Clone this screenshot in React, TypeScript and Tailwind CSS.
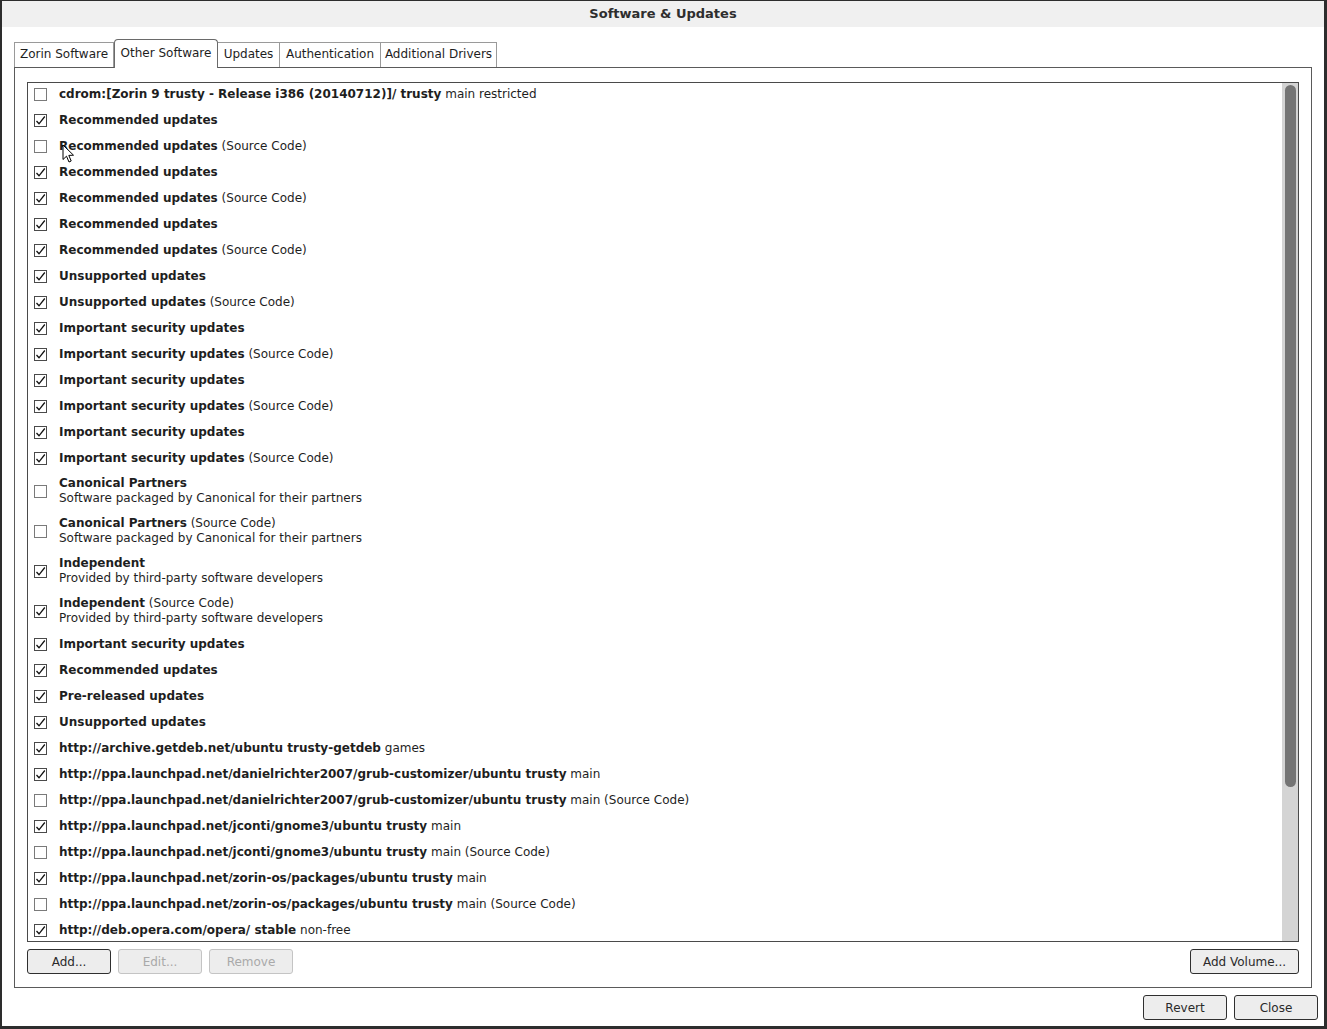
import { ReactNode } from 'react'

type Row = {
  checked: boolean
  title: string
  extra?: string
  sub?: string
}

const SRC = '(Source Code)'

const rows: Row[] = [
  { checked: false, title: 'cdrom:[Zorin 9 trusty - Release i386 (20140712)]/ trusty', extra: 'main restricted' },
  { checked: true, title: 'Recommended updates' },
  { checked: false, title: 'Recommended updates', extra: SRC },
  { checked: true, title: 'Recommended updates' },
  { checked: true, title: 'Recommended updates', extra: SRC },
  { checked: true, title: 'Recommended updates' },
  { checked: true, title: 'Recommended updates', extra: SRC },
  { checked: true, title: 'Unsupported updates' },
  { checked: true, title: 'Unsupported updates', extra: SRC },
  { checked: true, title: 'Important security updates' },
  { checked: true, title: 'Important security updates', extra: SRC },
  { checked: true, title: 'Important security updates' },
  { checked: true, title: 'Important security updates', extra: SRC },
  { checked: true, title: 'Important security updates' },
  { checked: true, title: 'Important security updates', extra: SRC },
  { checked: false, title: 'Canonical Partners', sub: 'Software packaged by Canonical for their partners' },
  { checked: false, title: 'Canonical Partners', extra: SRC, sub: 'Software packaged by Canonical for their partners' },
  { checked: true, title: 'Independent', sub: 'Provided by third-party software developers' },
  { checked: true, title: 'Independent', extra: SRC, sub: 'Provided by third-party software developers' },
  { checked: true, title: 'Important security updates' },
  { checked: true, title: 'Recommended updates' },
  { checked: true, title: 'Pre-released updates' },
  { checked: true, title: 'Unsupported updates' },
  { checked: true, title: 'http://archive.getdeb.net/ubuntu trusty-getdeb', extra: 'games' },
  { checked: true, title: 'http://ppa.launchpad.net/danielrichter2007/grub-customizer/ubuntu trusty', extra: 'main' },
  { checked: false, title: 'http://ppa.launchpad.net/danielrichter2007/grub-customizer/ubuntu trusty', extra: 'main (Source Code)' },
  { checked: true, title: 'http://ppa.launchpad.net/jconti/gnome3/ubuntu trusty', extra: 'main' },
  { checked: false, title: 'http://ppa.launchpad.net/jconti/gnome3/ubuntu trusty', extra: 'main (Source Code)' },
  { checked: true, title: 'http://ppa.launchpad.net/zorin-os/packages/ubuntu trusty', extra: 'main' },
  { checked: false, title: 'http://ppa.launchpad.net/zorin-os/packages/ubuntu trusty', extra: 'main (Source Code)' },
  { checked: true, title: 'http://deb.opera.com/opera/ stable', extra: 'non-free' },
]

const tabs = [
  { label: 'Zorin Software', w: 'w-[100px]' },
  { label: 'Other Software', w: 'w-[104px]', active: true },
  { label: 'Updates', w: 'w-[62px]' },
  { label: 'Authentication', w: 'w-[101px]' },
  { label: 'Additional Drivers', w: 'w-[116px]' },
]

function Checkbox({ checked }: { checked: boolean }) {
  return (
    <span
      className={
        'flex h-[13px] w-[13px] shrink-0 items-center justify-center border bg-white ' +
        (checked ? 'border-[#4a4a4a]' : 'border-[#7a7a7a]')
      }
    >
      {checked && (
        <svg width="11" height="11" viewBox="0 0 11 11" fill="none">
          <path d="M1.5 6 L4 8.8 L9.8 1.5" stroke="#111" strokeWidth="1.3" />
        </svg>
      )}
    </span>
  )
}

function Button({ children, w, disabled }: { children: ReactNode; w: string; disabled?: boolean }) {
  return (
    <button
      className={
        'flex h-[25px] items-center justify-center rounded-[3px] border bg-[#ededed] text-[12px] ' +
        w +
        (disabled ? ' border-[#c4c4c4] text-[#a9a9a9]' : ' border-[#2f2f2f] text-[#2a2a2a]')
      }
    >
      {children}
    </button>
  )
}

function Cursor() {
  return (
    <svg className="absolute left-[60px] top-[143px]" width="13" height="20" viewBox="0 0 13 20">
      <path
        d="M1 1 L1 15.5 L4.5 12.2 L7 18 L9.2 17 L6.8 11.4 L11.5 11.2 Z"
        fill="#fff"
        stroke="#000"
        strokeWidth="1"
        strokeLinejoin="round"
      />
    </svg>
  )
}

export default function App() {
  return (
    <div
      className="relative flex h-[1029px] w-[1327px] flex-col overflow-hidden border-b-[3px] border-l-2 border-r-[3px] border-t border-[#2d2d2d] bg-white text-[#1e1e1e]"
      style={{ fontFamily: '"DejaVu Sans", "Noto Sans", sans-serif' }}
    >
      {/* Title bar */}
      <div className="flex h-[26px] shrink-0 items-center justify-center bg-[#f0f0f0]">
        <span className="text-[13px] font-bold text-[#2e2e2e]">Software &amp; Updates</span>
      </div>

      <div className="flex flex-1 flex-col pl-[12px] pr-[6px] pt-[12px]">
        {/* Tabs */}
        <div className="flex h-[28px] items-end">
          {tabs.map((t) => (
            <div
              key={t.label}
              className={
                'relative flex items-center justify-center text-[12px] ' +
                t.w +
                (t.active
                  ? ' z-10 -mb-px h-[29px] rounded-t-[4px] border border-b-0 border-[#6a6a6a] bg-white pb-[3px]'
                  : ' h-[25px] border-r border-t border-[#9a9a9a] bg-white pb-[2px] first:border-l')
              }
            >
              {t.label}
            </div>
          ))}
        </div>

        {/* Notebook page */}
        <div className="mr-[6px] flex h-[921px] flex-col border border-[#5a5a5a] px-[12px] pb-[12px] pt-[14px]">
          <div className="relative flex h-[860px] overflow-hidden border border-[#4a4a4a] bg-white">
            <div className="-mt-[2px] flex flex-1 flex-col pl-[6px]">
              {rows.map((r, i) => (
                <div
                  key={i}
                  className={'flex shrink-0 items-center gap-[12px] ' + (r.sub ? 'h-[40px]' : 'h-[26px]')}
                >
                  <Checkbox checked={r.checked} />
                  <div className="flex flex-col text-[12px] leading-[15px]">
                    <span className="whitespace-nowrap">
                      <span className="font-bold">{r.title}</span>
                      {r.extra && <span> {r.extra}</span>}
                    </span>
                    {r.sub && <span className="whitespace-nowrap">{r.sub}</span>}
                  </div>
                </div>
              ))}
            </div>
            {/* Scrollbar */}
            <div className="flex w-[16px] shrink-0 justify-center bg-[#d4d4d4] pt-[2px]">
              <div className="h-[702px] w-[11px] rounded-full bg-[#747474]" />
            </div>
          </div>

          <div className="mt-[7px] flex items-center">
            <div className="flex gap-[7px]">
              <Button w="w-[84px]">Add...</Button>
              <Button w="w-[84px]" disabled>
                Edit...
              </Button>
              <Button w="w-[84px]" disabled>
                Remove
              </Button>
            </div>
            <div className="ml-auto">
              <Button w="w-[109px]">Add Volume...</Button>
            </div>
          </div>
        </div>

        {/* Dialog buttons */}
        <div className="mt-[7px] flex justify-end gap-[7px]">
          <Button w="w-[84px]">Revert</Button>
          <Button w="w-[84px]">Close</Button>
        </div>
      </div>

      <Cursor />
    </div>
  )
}
